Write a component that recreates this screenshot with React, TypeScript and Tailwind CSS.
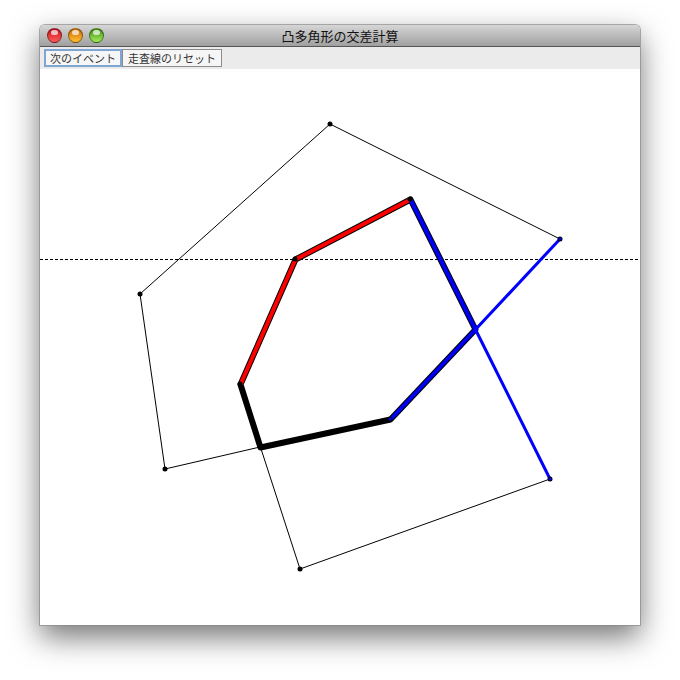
const cjk = "font-['Noto_Sans_CJK_JP','Liberation_Sans',sans-serif]"

const outerA = "330,124 560,239 390,419 260,447 165,469 140,294"
const outerB = "410,199 550,479 300,569 240,384 295,259"
const vertices = [
  [330, 124], [560, 239], [390, 419], [165, 469], [140, 294],
  [410, 199], [550, 479], [300, 569], [240, 384], [295, 259],
]

function Light({ className }: { className: string }) {
  return (
    <div className={`relative h-[15px] w-[15px] rounded-full border border-black/40 ${className}`}>
      <div className="absolute left-[3px] top-[1px] h-[5px] w-[7px] rounded-full bg-white/70 blur-[0.5px]" />
    </div>
  )
}

function Canvas() {
  return (
    <svg width="600" height="556" viewBox="40 69 600 556" className="block bg-white">
      <polygon points={outerA} fill="none" stroke="#000" strokeWidth="1" />
      <polygon points={outerB} fill="none" stroke="#000" strokeWidth="1" />
      <line x1="40" y1="259.5" x2="640" y2="259.5" stroke="#000" strokeWidth="1" strokeDasharray="3 2" />
      {/* 交差部分の太線 */}
      <polygon points="295.5,259.5 410.5,199.5 475.5,329.5 390.5,419.5 260.5,447.5 240.5,384.5" fill="none" stroke="#000" strokeWidth="6" strokeLinejoin="round" />
      <polyline points="240.5,384.5 295.5,259.5 410.5,199.5" fill="none" stroke="#ff0000" strokeWidth="4" />
      <polyline points="410.5,199.5 475.5,329.5 390.5,419.5" fill="none" stroke="#0000f0" strokeWidth="4" />
      {/* 走査線上の辺 */}
      <line x1="560" y1="239" x2="475.5" y2="329.5" stroke="#0000ff" strokeWidth="3" />
      <line x1="475.5" y1="329.5" x2="550" y2="479" stroke="#0000ff" strokeWidth="3" />
      {vertices.map(([x, y]) => (
        <circle key={`${x}-${y}`} cx={x} cy={y} r="2.5" fill="#000" />
      ))}
      <circle cx="560" cy="239" r="1.5" fill="#0000ff" />
      <circle cx="550" cy="479" r="1.5" fill="#0000ff" />
      <circle cx="390" cy="419" r="1.5" fill="#0000ff" />
    </svg>
  )
}

export default function App() {
  return (
    <div className={`h-[680px] w-[680px] overflow-hidden bg-white pl-[40px] pt-[25px] ${cjk}`}>
      <div className="w-[600px] rounded-t-[5px] shadow-[0_12px_30px_rgba(0,0,0,0.55)] ring-1 ring-[#8a8a8a]/70">
        <div className="relative flex h-[22px] items-center gap-[6px] rounded-t-[5px] border-b border-[#555] bg-gradient-to-b from-[#d6d6d6] to-[#a0a0a0] pl-[7px]">
          <Light className="bg-gradient-to-b from-[#c8001c] to-[#ff5a5a]" />
          <Light className="bg-gradient-to-b from-[#cc6a00] to-[#ffc030]" />
          <Light className="bg-gradient-to-b from-[#3c9010] to-[#a4ec58]" />
          <div className="absolute inset-x-0 top-0 text-center text-[13px] leading-[22px] text-[#111]">凸多角形の交差計算</div>
        </div>
        <div className="flex h-[22px] items-center bg-[#ebebeb] pl-[4px]">
          <button className="h-[18px] w-[78px] border-2 border-[#7fa6d2] bg-[#f6f6f6] text-[11px] leading-[14px] text-[#333]">次のイベント</button>
          <button className="h-[18px] w-[100px] border border-[#8c8c8c] bg-[#f6f6f6] text-[11px] leading-[16px] text-[#333]">走査線のリセット</button>
        </div>
        <Canvas />
      </div>
    </div>
  )
}
